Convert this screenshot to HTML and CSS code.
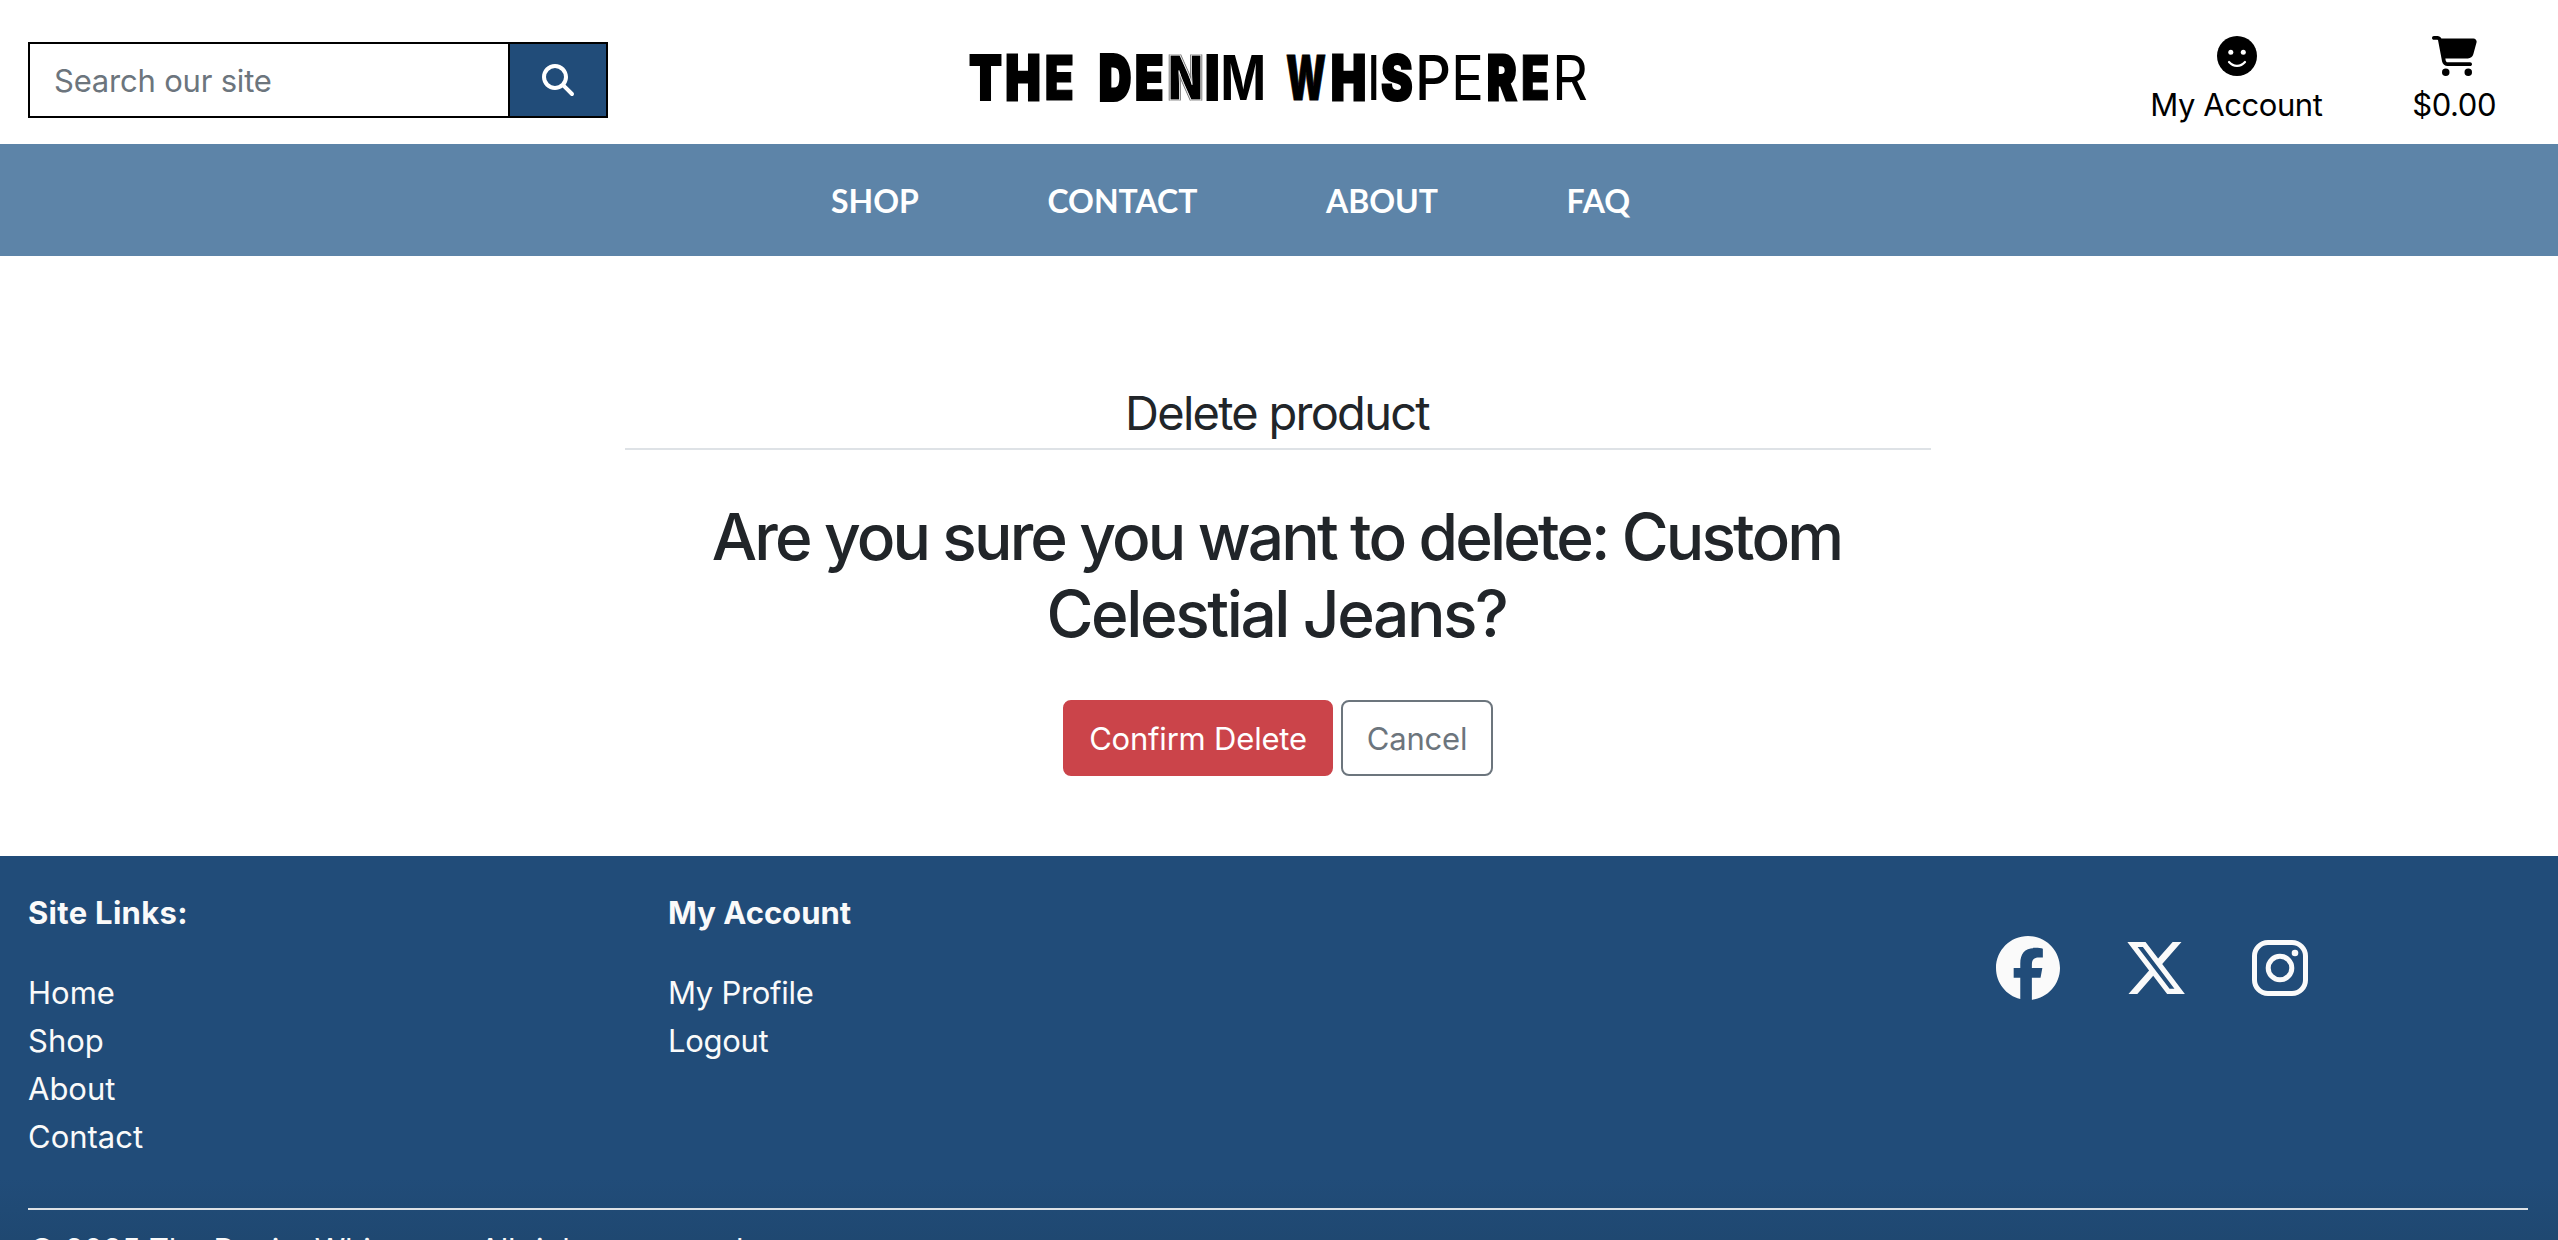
FILE: index.html
```html
<!DOCTYPE html>
<html lang="en">
<head>
<meta charset="utf-8">
<title>The Denim Whisperer</title>
<link rel="stylesheet" href="styles.css">
</head>
<body>
<header class="header">
  <form class="search">
    <input class="search-input" type="text" placeholder="Search our site">
    <button class="search-btn" type="button" aria-label="Search">
      <svg class="icon-search" viewBox="0 0 512 512"><path d="M416 208c0 45.900-14.900 88.300-40 122.700L502.600 457.400c12.500 12.500 12.500 32.800 0 45.300s-32.800 12.500-45.300 0L330.700 376c-34.400 25.200-76.800 40-122.700 40C93.100 416 0 322.900 0 208S93.100 0 208 0S416 93.100 416 208zM208 352a144 144 0 1 0 0-288 144 144 0 1 0 0 288z"/></svg>
    </button>
  </form>
  <a class="logo" href="#">
    <svg class="logo-art" viewBox="960 40 640 80">
      <g class="letters">
        <text class="w9 s2" x="969" y="100" textLength="33" lengthAdjust="spacingAndGlyphs">T</text>
        <text class="w9 s3" x="1005.500" y="100" textLength="35" lengthAdjust="spacingAndGlyphs">H</text>
        <text class="w9 s1" x="1044.600" y="100" textLength="29.600" lengthAdjust="spacingAndGlyphs">E</text>
        <text class="w9 s4" x="1099.300" y="100" textLength="31.700" lengthAdjust="spacingAndGlyphs">D</text>
        <text class="w9 s2" x="1134.800" y="100" textLength="29" lengthAdjust="spacingAndGlyphs">E</text>
        <text class="w9 outline" x="1168" y="100" textLength="35" lengthAdjust="spacingAndGlyphs">N</text>
        <text class="w9 s2" x="1205" y="100" textLength="14.500" lengthAdjust="spacingAndGlyphs">I</text>
        <text class="w7" x="1220.500" y="100" textLength="45.500" lengthAdjust="spacingAndGlyphs">M</text>
        <text class="w9 s1" x="1286" y="100" textLength="40" lengthAdjust="spacingAndGlyphs">W</text>
        <text class="w9 s3" x="1331" y="100" textLength="35" lengthAdjust="spacingAndGlyphs">H</text>
        <text class="w5" x="1367.500" y="100" textLength="12.500" lengthAdjust="spacingAndGlyphs">I</text>
        <text class="w9 s2" x="1381" y="100" textLength="31.700" lengthAdjust="spacingAndGlyphs">S</text>
        <text class="w5" x="1415" y="100" textLength="36" lengthAdjust="spacingAndGlyphs">P</text>
        <text class="w4" x="1451" y="100" textLength="33" lengthAdjust="spacingAndGlyphs">E</text>
        <text class="w9 s3" x="1487" y="100" textLength="29.500" lengthAdjust="spacingAndGlyphs">R</text>
        <text class="w9 s1" x="1521" y="100" textLength="28.500" lengthAdjust="spacingAndGlyphs">E</text>
        <text class="w4" x="1552" y="100" textLength="36" lengthAdjust="spacingAndGlyphs">R</text>
      </g>
    </svg>
  </a>
  <div class="tools">
    <a class="tool account" href="#">
      <svg class="icon-face" viewBox="0 0 40 40"><circle cx="20" cy="20" r="20"/><circle class="cut" cx="13.800" cy="16.300" r="2.500"/><circle class="cut" cx="26.300" cy="16.300" r="2.500"/><path class="cut-line" d="M12 26c2 2.300 4.700 3.800 8 3.800s6-1.500 8-3.800"/></svg>
      <span>My Account</span>
    </a>
    <a class="tool cart" href="#">
      <svg class="icon-cart" viewBox="0 0 576 512"><path d="M0 24C0 10.700 10.700 0 24 0H69.500c22 0 41.500 12.800 50.600 32h411c26.300 0 45.500 25 38.600 50.400l-41 152.300c-8.500 31.400-37 53.300-69.500 53.300H170.700l5.400 28.500c2.200 11.300 12.100 19.500 23.600 19.500H488c13.300 0 24 10.700 24 24s-10.700 24-24 24H199.700c-34.600 0-64.300-24.600-70.700-58.500L77.400 54.500c-.7-3.800-4-6.500-7.900-6.500H24C10.700 48 0 37.300 0 24zM128 464a48 48 0 1 1 96 0 48 48 0 1 1-96 0zm336-48a48 48 0 1 1 0 96 48 48 0 1 1 0-96z"/></svg>
      <span>$0.00</span>
    </a>
  </div>
</header>
<nav class="nav">
  <a href="#">SHOP</a><a href="#">CONTACT</a><a href="#">ABOUT</a><a href="#">FAQ</a>
</nav>
<main class="main">
  <h3 class="title">Delete product</h3>
  <h2 class="question">Are you sure you want to delete: Custom<br><span class="product">Celestial Jeans?</span></h2>
  <div class="actions">
    <button class="btn danger" type="button">Confirm Delete</button>
    <button class="btn cancel" type="button">Cancel</button>
  </div>
</main>
<footer class="footer">
  <div class="footer-cols">
    <section class="col">
      <h4 class="site-links">Site Links:</h4>
      <ul><li>Home</li><li>Shop</li><li>About</li><li>Contact</li></ul>
    </section>
    <section class="col account-links">
      <h4>My Account</h4>
      <ul><li>My Profile</li><li>Logout</li></ul>
    </section>
    <div class="social">
      <svg class="fb" viewBox="0 0 512 512"><path d="M512 256C512 114.600 397.400 0 256 0S0 114.600 0 256C0 376 82.700 476.800 194.200 504.500V334.200H141.400V256h52.800V222.300c0-87.100 39.400-127.500 125-127.500c16.200 0 44.200 3.200 55.700 6.400V172c-6-.6-16.500-1-29.600-1c-42 0-58.200 15.900-58.200 57.200V256h83.600l-14.400 78.200H287V510.100C413.800 494.800 512 386.900 512 256z"/></svg>
      <svg class="tw" viewBox="0 0 512 512"><path d="M389.200 48h70.600L305.600 224.200 487 464H345L233.700 318.600 106.500 464H35.800L200.700 275.500 26.800 48H172.400L272.900 180.900 389.200 48zM364.400 421.800h39.100L151.100 88h-42L364.400 421.800z"/></svg>
      <svg class="ig" viewBox="0 0 56 56"><rect x="2.500" y="2.500" width="51" height="51" rx="13.500"/><circle cx="28" cy="28" r="11.800"/><circle class="dot" cx="43" cy="13" r="3.300"/></svg>
    </div>
  </div>
  <p class="copy">© 2025 The Denim Whisperer. All rights reserved.</p>
</footer>
</body>
</html>
```

FILE: styles.css
```css
* { box-sizing: border-box; }

body {
  margin: 0;
  height: 1240px;
  overflow: hidden;
  background: #fff;
  color: #212529;
  font-family: Inter, "Liberation Sans", sans-serif;
  font-size: 31px;
  line-height: 48px;
}

a { color: inherit; text-decoration: none; }
svg { display: block; }

.header {
  height: 144px;
  display: grid;
  grid-template-columns: 580px 640px 1fr;
  column-gap: 352px;
  padding: 0 28px;
}

.search { display: flex; height: 76px; margin-top: 42px; }
.search-input {
  flex: 1;
  min-width: 0;
  border: 2px solid #000;
  border-right: 0;
  padding: 1px 24px 0;
  background: #fff;
  font: inherit;
  letter-spacing: -0.200px;
}
.search-input::placeholder { color: #6c757d; opacity: 1; }
.search-btn {
  width: 100px;
  border: 2px solid #000;
  background: #214c79;
  padding: 0;
  display: flex;
  align-items: center;
  justify-content: center;
}
.icon-search { width: 32px; height: 32px; fill: #fff; }

.logo { padding-top: 40px; }
.logo-art { width: 640px; height: 80px; }
.letters { font-family: Inter, sans-serif; font-size: 62px; }
.w9 { font-weight: 900; }
.w7 { font-weight: 700; }
.w5 { font-weight: 500; }
.w4 { font-weight: 400; }
.s1 { stroke: #000; stroke-width: 1px; }
.s2 { stroke: #000; stroke-width: 2px; }
.s3 { stroke: #000; stroke-width: 3px; }
.s4 { stroke: #000; stroke-width: 4px; }
.outline { stroke: #fff; stroke-width: 1px; filter: drop-shadow(1px 0 0 #777) drop-shadow(-1px 0 0 #777); }

.tools { display: flex; justify-content: flex-end; gap: 90px; padding: 36px 34px 0 0; color: #000; margin-left: -300px; }
.tool { display: flex; flex-direction: column; align-items: center; gap: 5px; letter-spacing: -0.450px; }
.icon-face { width: 40px; height: 40px; margin-left: 1px; }
.cut { fill: #fff; }
.cut-line { fill: none; stroke: #fff; stroke-width: 2.200px; stroke-linecap: round; }
.icon-cart { width: 45px; height: 40px; }

.nav {
  height: 112px;
  display: flex;
  align-items: center;
  padding: 1px 0 0 831px;
  gap: 128.500px;
  background: #5d84a8;
  color: #fff;
  font: 700 32px/48px Lato, sans-serif;
}

.main { height: 600px; display: flex; flex-direction: column; align-items: center; padding: 128px 2px 0 0; }
.title {
  width: 1306px;
  height: 66px;
  margin: 0;
  padding-right: 2px;
  border-bottom: 2px solid #dee2e6;
  text-align: center;
  font-weight: 400;
  font-size: 47px;
  line-height: 58px;
  letter-spacing: -1.750px;
}
.question { margin: 48px 0 0; padding-right: 3px; text-align: center; font-weight: 500; font-size: 64px; line-height: 77px; letter-spacing: -2.850px; }
.product { letter-spacing: -2.400px; }
.actions { display: flex; gap: 8px; margin-top: 48px; }
.btn { height: 76px; border-radius: 8px; border: 2px solid; padding: 1px 0 0; font: inherit; letter-spacing: -0.200px; }
.danger { width: 270px; background: #cb444a; border-color: #cb444a; color: #fff; }
.cancel { width: 152px; background: #fff; border-color: #6c757d; color: #6c757d; }

.footer {
  height: 384px;
  padding: 33px 30px 0 28px;
  background: linear-gradient(#214c79 84%, #1f4871);
  color: #fafafa;
}
.footer-cols { display: grid; grid-template-columns: 640px 640px 1fr; height: 319px; }
.footer h4 { margin: 0 0 32px; font-size: 31px; font-weight: 700; }
.footer .site-links { letter-spacing: 0.300px; }
.footer ul { margin: 0; padding: 0; list-style: none; }
.account-links ul { letter-spacing: -0.300px; }
.social { display: flex; align-items: center; gap: 64px; height: 64px; margin: 47px 0 0 688px; }
.fb, .tw { width: 64px; height: 64px; fill: #fafafa; }
.ig { width: 56px; height: 56px; fill: none; stroke: #fafafa; stroke-width: 5px; }
.ig .dot { fill: #fafafa; stroke: none; }
.copy { margin: 0; padding-top: 16px; border-top: 2px solid #dee2e6; letter-spacing: -0.150px; }
```
